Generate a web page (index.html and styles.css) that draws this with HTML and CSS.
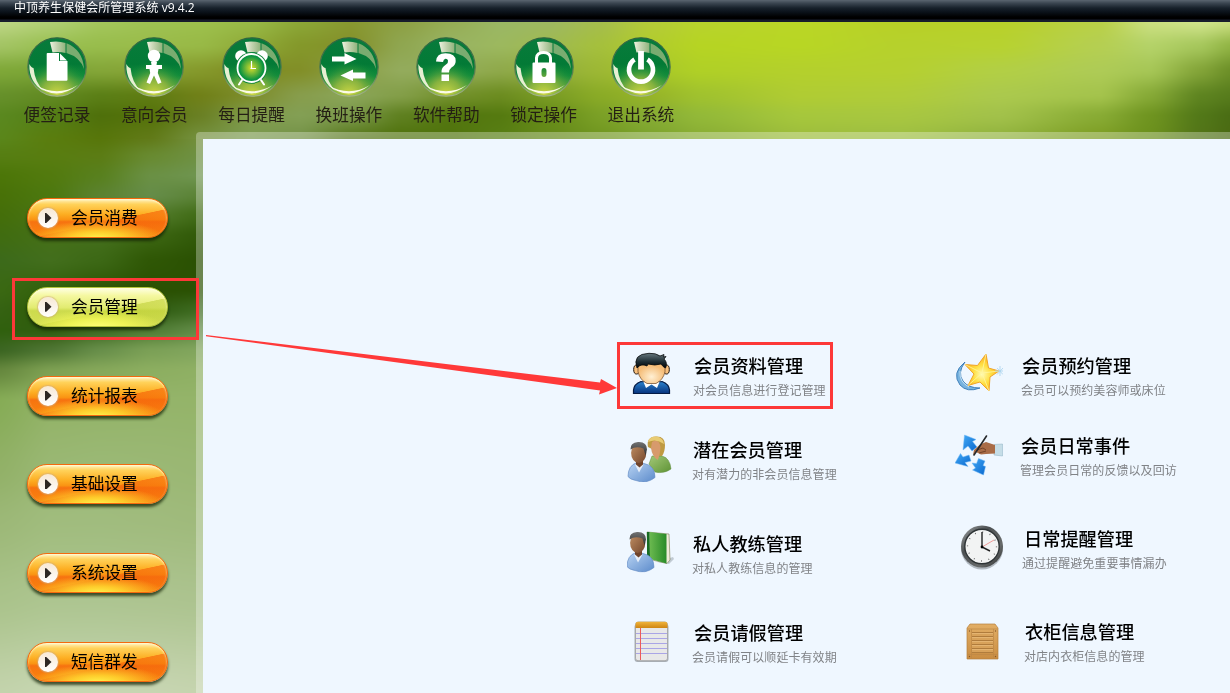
FILE: index.html
```html
<!DOCTYPE html>
<html lang="zh-CN">
<head>
<meta charset="utf-8">
<title>中顶养生保健会所管理系统</title>
<link rel="stylesheet" href="styles.css">
</head>
<body>
<canvas class="backdrop" width="1230" height="693" aria-hidden="true"></canvas>

<header class="titlebar">中顶养生保健会所管理系统 v9.4.2</header>

<svg class="defs" aria-hidden="true">
  <defs>
    <linearGradient id="orbFill" x1="0" y1="0" x2="0" y2="1"><stop offset="0" stop-color="#087b3c"/><stop offset=".45" stop-color="#037a36"/><stop offset=".65" stop-color="#128c3b"/><stop offset="1" stop-color="#a6c040"/></linearGradient>
    <radialGradient id="orbGlow" cx=".5" cy="1" r=".62"><stop offset="0" stop-color="#d1d944"/><stop offset=".45" stop-color="#86b23f"/><stop offset="1" stop-color="#0b8a39" stop-opacity="0"/></radialGradient>
    <linearGradient id="glass"><stop offset="0" stop-color="#eef2df"/><stop offset=".45" stop-color="#c3d3b0"/><stop offset="1" stop-color="#8fb37c"/></linearGradient>
    <linearGradient id="rim" x1="0" y1="0" x2="0" y2="1"><stop offset="0" stop-color="#2d6540"/><stop offset=".6" stop-color="#587d50"/><stop offset="1" stop-color="#a5b48c"/></linearGradient>
    <radialGradient id="clockGlow"><stop offset="0" stop-color="#d8dc2c"/><stop offset=".85" stop-color="#0c9440"/></radialGradient>
    <symbol id="orb" viewBox="0 0 60 60">
      <circle cx="30" cy="30" r="29.200" fill="url(#orbFill)" stroke="url(#rim)" stroke-width="1.200"/>
      <circle cx="30" cy="30" r="28" fill="url(#orbGlow)"/>
      <path d="M23 5Q31 3.500 38.500 6V16Q32 14.500 25.500 15.500Z" fill="url(#glass)"/>
      <path d="M39.500 6.300Q56 13 57 32 53 20 39.500 16Z" fill="#8fb57a" opacity=".85"/>
      <path d="M2.300 27Q2 46 17 54 8 46 6.500 31Q4.500 31 2.300 27Z" fill="#e6efd2"/>
      <path d="M9 48Q29 65 51 48 30 60.500 9 48Z" fill="#fbfbe8"/>
    </symbol>
    <linearGradient id="skin" x1="0" y1="0" x2="1" y2="1"><stop offset="0" stop-color="#c29064"/><stop offset="1" stop-color="#74472d"/></linearGradient>
    <linearGradient id="hair" x1="0" y1="0" x2="0" y2="1"><stop offset="0" stop-color="#727272"/><stop offset="1" stop-color="#303030"/></linearGradient>
    <linearGradient id="shirt" x1="0" y1="0" x2="1" y2="1"><stop offset="0" stop-color="#b9d4f3"/><stop offset="1" stop-color="#5c8bcb"/></linearGradient>
    <linearGradient id="blouse" x1="0" y1="0" x2="1" y2="1"><stop offset="0" stop-color="#a3c878"/><stop offset="1" stop-color="#5e9335"/></linearGradient>
    <radialGradient id="face" cx=".5" cy=".7"><stop offset="0" stop-color="#fff0d4"/><stop offset="1" stop-color="#f5bd78"/></radialGradient>
    <linearGradient id="cap" x1="0" y1="0" x2="0" y2="1"><stop offset="0" stop-color="#66777d"/><stop offset=".6" stop-color="#1b2a30"/><stop offset="1" stop-color="#020506"/></linearGradient>
    <linearGradient id="suit" x1="0" y1="0" x2="0" y2="1"><stop offset="0" stop-color="#2b82cd"/><stop offset="1" stop-color="#07337d"/></linearGradient>
    <radialGradient id="gold" cx=".5" cy=".55"><stop offset="0" stop-color="#fffbb5"/><stop offset=".5" stop-color="#ffe044"/><stop offset="1" stop-color="#fdb51e"/></radialGradient>
    <linearGradient id="blueArrow" x1="0" y1="0" x2="1" y2="1"><stop offset="0" stop-color="#42a9f5"/><stop offset="1" stop-color="#0967ce"/></linearGradient>
    <linearGradient id="bezel" x1="0" y1="0" x2="1" y2="1"><stop offset="0" stop-color="#a0a3a3"/><stop offset=".35" stop-color="#4c5052"/><stop offset=".7" stop-color="#686b6b"/><stop offset="1" stop-color="#242626"/></linearGradient>
    <linearGradient id="wood" x1="0" y1="0" x2="0" y2="1"><stop offset="0" stop-color="#e2ae65"/><stop offset="1" stop-color="#c98d42"/></linearGradient>
    <linearGradient id="book"><stop offset="0" stop-color="#6cba50"/><stop offset="1" stop-color="#298b29"/></linearGradient>
    <linearGradient id="orange" x1="0" y1="0" x2="0" y2="1"><stop offset="0" stop-color="#f0b43c"/><stop offset="1" stop-color="#cf8511"/></linearGradient>
    <symbol id="man" viewBox="0 0 30 42">
      <path d="M1 36Q1 25 10 22L17 23Q28 25 28 37 19 44 9 40 3 39 1 36Z" fill="url(#shirt)" stroke="#6a91c7" stroke-width=".7"/>
      <path d="M8 24L12 32 16.500 24" fill="#e6eef8"/><path d="M9 19H16V24L12.500 27 9 24Z" fill="#70442b"/>
      <ellipse cx="11.700" cy="12.500" rx="7.600" ry="10" fill="url(#skin)"/>
      <path d="M3.500 9Q3 2 11 1.500 20 1 20 9L18.500 15 16.500 8Q9 5 3.500 9Z" fill="url(#hair)"/>
    </symbol>
  </defs>
</svg>

<nav class="toolbar">
  <a class="tool"><svg class="orb" viewBox="0 0 60 60"><use href="#orb"/><path d="M20.500 16H32V24H40.500V42.500Q40.500 43.800 39.500 43.800H20.800Q19.700 43.800 19.700 42.700V17Q19.700 16 20.500 16Z" fill="#fff"/><path d="M33 16.500L40 23.500H33Z" fill="#fff"/></svg><span>便签记录</span></a>
  <a class="tool"><svg class="orb" viewBox="0 0 60 60"><use href="#orb"/><circle cx="30" cy="19" r="6.200" fill="#fff"/><path d="M27 25H33L32.500 28H38V32H34.500L33.800 36 37.500 45.500 34 47 30 38.500 26 47 22.500 45.500 26.200 36 25.500 32H22V28H27.500Z" fill="#fff"/></svg><span>意向会员</span></a>
  <a class="tool"><svg class="orb" viewBox="0 0 60 60"><use href="#orb"/><circle cx="19" cy="19" r="5.800" fill="#fff"/><circle cx="40" cy="19" r="5.800" fill="#fff"/><circle cx="29.500" cy="31" r="15.800" fill="#11853b"/><path d="M20 43L17 47.500M39 43L42 47.500" stroke="#fff" stroke-width="2" stroke-linecap="round"/><circle cx="29.500" cy="31" r="14" fill="url(#clockGlow)" stroke="#fff" stroke-width="1.800"/><path d="M29.500 24V32M28.500 31.500H34" stroke="#fff" stroke-width="1.200"/></svg><span>每日提醒</span></a>
  <a class="tool"><svg class="orb" viewBox="0 0 60 60"><use href="#orb"/><path d="M13 19.500H25.500V16L37.500 22 25.500 27.500V24.500H13ZM46.500 35.500H34V32.500L21.500 38.500 34 44V41.500H46.500Z" fill="#fff"/></svg><span>换班操作</span></a>
  <a class="tool"><svg class="orb" viewBox="0 0 60 60"><use href="#orb"/><path d="M20 24.500Q20.500 16.300 29.500 16.300 39.700 16.300 39.700 24 39.700 28 35.500 30.500 33 32.500 33 35.500H25.500Q25 30.500 30 27.500 32.500 25.500 32 23.500 31.500 21.500 29.500 21.700 27.500 22 27 25ZM25.500 37.500H33V44H25.500Z" fill="#fff"/></svg><span>软件帮助</span></a>
  <a class="tool"><svg class="orb" viewBox="0 0 60 60"><use href="#orb"/><path d="M22.500 27V21Q23 15.500 29.500 15.500 36 15.500 36.500 21V27" fill="none" stroke="#fff" stroke-width="3"/><path fill-rule="evenodd" d="M19.500 25.500H40.500Q41.500 25.500 41.500 26.500V45Q41.500 46 40.500 46H19.500Q18.500 46 18.500 45V26.500Q18.500 25.500 19.500 25.500ZM30 31Q27.500 31 27.500 34V37Q27.500 40 30 40 32.500 40 32.500 37V34Q32.500 31 30 31Z" fill="#fff"/></svg><span>锁定操作</span></a>
  <a class="tool"><svg class="orb" viewBox="0 0 60 60"><use href="#orb"/><path d="M23.500 22.500A12 12 0 1 0 36.500 22.500" fill="none" stroke="#fff" stroke-width="4.600"/><path d="M30 14V32.500" stroke="#fff" stroke-width="5.800"/></svg><span>退出系统</span></a>
</nav>

<div class="body">
  <aside class="sidebar">
    <a class="pill"><i class="play"></i>会员消费</a>
    <a class="pill active"><i class="play"></i>会员管理<b class="mark"></b></a>
    <a class="pill"><i class="play"></i>统计报表</a>
    <a class="pill"><i class="play"></i>基础设置</a>
    <a class="pill"><i class="play"></i>系统设置</a>
    <a class="pill"><i class="play"></i>短信群发</a>
  </aside>

  <main class="panel">
    <svg class="arrow" viewBox="0 0 422 70"><path d="M3 8L397 55.500 398 52 414 61 396 67.500 397 63.500 3 9.200Z" fill="#ff3939"/></svg>
    <div class="column left">
      <a class="item r1">
        <svg class="icon" viewBox="0 0 48 48">
          <path d="M6.500 43.500V40Q7 34 14 31.500L24.500 33 35 31.500Q42 34 42.500 40V43.500Z" fill="url(#suit)" stroke="#041b45" stroke-width="1.200"/>
          <path d="M16.500 32L19 38 24.500 34.500 30 38 32.500 32Z" fill="#fff"/>
          <ellipse cx="9.500" cy="19.500" rx="2.800" ry="4.500" fill="#f8c07e" stroke="#1a1109"/><ellipse cx="39.500" cy="19.500" rx="2.800" ry="4.500" fill="#f8c07e" stroke="#1a1109"/>
          <path d="M11 14Q24 8 38 14V22Q36 30 29 33.500H20Q13 30 11 22Z" fill="url(#face)" stroke="#6b4420" stroke-width=".7"/>
          <path d="M10 18Q5 4 22 3.300 29 3 33 6L37 4.500 36.500 7 39 6.500 37 9Q41 13 38.500 18 36 17 34 14 28 16 21 14L20 16Q14 13 10 18Z" fill="url(#cap)" stroke="#080b0c" stroke-width=".8"/>
        </svg>
        <span class="copy"><strong>会员资料管理</strong><small>对会员信息进行登记管理</small></span><b class="mark"></b>
      </a>
      <a class="item r2">
        <svg class="icon" viewBox="0 0 48 48">
          <path d="M25 22H35Q43 24 44 35 37 40 28 38L22 30Z" fill="url(#blouse)" stroke="#5b8936" stroke-width=".5"/>
          <path d="M21 13Q19 3 29 2.500 38 2 38 11 38 18 35 22H28Q26 20 25 15Z" fill="#bf9a42"/><path d="M25 8Q32 4 33.500 13 33 22 30.500 26 25 22 24 14Z" fill="#d79a6c"/><path d="M21 8Q22 2.500 29 2.500 36 3 37 10 29 4 21 8Z" fill="#e8cb73"/>
          <use href="#man" x="0" y="6.500" width="30" height="42"/>
        </svg>
        <span class="copy"><strong>潜在会员管理</strong><small>对有潜力的非会员信息管理</small></span>
      </a>
      <a class="item r3">
        <svg class="icon" viewBox="0 0 48 48">
          <path d="M30 34L46 29 47 31 42 36Z" fill="#7d8a91" opacity=".4"/>
          <path d="M20 4L42 6 43 32 40 35.500 21 31Z" fill="#f0ecd9" stroke="#777852" stroke-width=".6"/><path d="M22.500 4L39.500 6V35.500L23 31Z" fill="url(#book)"/><path d="M20 4H22.500L23 31 20 29Z" fill="#176b21"/>
          <use href="#man" x="-1" y="2.500" width="30" height="42"/>
        </svg>
        <span class="copy"><strong>私人教练管理</strong><small>对私人教练信息的管理</small></span>
      </a>
      <a class="item r4">
        <svg class="icon" viewBox="0 0 48 48">
          <rect x="7.500" y="7" width="34" height="38" rx="3" fill="#7b8288" opacity=".6"/>
          <rect x="8.500" y="5" width="32" height="38.700" rx="2.500" fill="#e8e8e8" stroke="#999" stroke-width=".7"/>
          <path d="M8.500 11V7Q8.500 4.800 11 4.800H38Q40.500 4.800 40.500 7V11Z" fill="url(#orange)"/>
          <path d="M9 16.500H40M9 21.500H40M9 26.500H40M9 31.500H40M9 36.500H40" stroke="#aaa5e6"/><path d="M13.500 11V43" stroke="#ed5a5a"/>
        </svg>
        <span class="copy"><strong>会员请假管理</strong><small>会员请假可以顺延卡有效期</small></span>
      </a>
    </div>
    <div class="column right">
      <a class="item s1">
        <svg class="icon" viewBox="0 0 48 48">
          <path d="M10 12Q-4 23 5 35 12 43 25 38 13 38 8 31 2 23 10 12Z" fill="#78b3df" stroke="#2a6eaf" stroke-width=".8"/><path d="M5 21Q4 32 14 37" fill="none" stroke="#c6e2f5" stroke-width="1"/>
          <path d="M31 4L33.500 18 44 21 35 27 34 41 25 32 13 35.500 19 24 10 14.500 22.500 15.500Z" fill="url(#gold)" stroke="#f0a429" stroke-linejoin="round"/>
          <path d="M27 23L31 4M27 23L44 21M27 23L34 41M27 23L13 35.500M27 23L10 14.500" stroke="#fff6a3" stroke-width=".8"/>
          <path d="M45 16V26M40 21H48M42 18L48 24.500M42 24.500L48 18" stroke="#a7d2ee" stroke-width=".8"/>
        </svg>
        <span class="copy"><strong>会员预约管理</strong><small>会员可以预约美容师或床位</small></span>
      </a>
      <a class="item s2">
        <svg class="icon" viewBox="0 0 48 48">
          <g fill="url(#blueArrow)" stroke="#73b9f4" stroke-width=".5"><path d="M9.500 5L21 9.500 17.500 11.500 22 17 17 21 13 16 8 20Z"/><path d="M0 33L5.500 23.500 8 27 14 25 16 31 10 32.500 13 36.500Z"/><path d="M17 33L21.500 33.500 23.500 28.500 30 31 28 35.500 30.500 36.500 28.500 45 17.500 40 20.500 38Z"/></g>
          <path d="M39 14.500L47.500 14V26L39 25Z" fill="#c5dde7" stroke="#8eb3c4" stroke-width=".5"/>
          <path d="M19 20L25 14.500 31 12 40 15V23.500L31 24 26 24.500 21 22 18 25Z" fill="#a96c47"/><path d="M22 20L28 18 31 20M24 23L31 21" fill="none" stroke="#643720" stroke-width=".8"/>
          <path d="M31.500 6L19 25" stroke="#26292c" stroke-width="1.600" stroke-linecap="round"/>
        </svg>
        <span class="copy"><strong>会员日常事件</strong><small>管理会员日常的反馈以及回访</small></span>
      </a>
      <a class="item s3">
        <svg class="icon" viewBox="0 0 48 48">
          <circle cx="27" cy="25.500" r="21" fill="#737c83" opacity=".5"/><circle cx="27" cy="23.500" r="21" fill="url(#bezel)"/><circle cx="27" cy="23.500" r="17.200" fill="#f2f3f3" stroke="#2e3335" stroke-width="1.400"/>
          <circle cx="27" cy="23.500" r="14.500" fill="none" stroke="#555" stroke-width="1.300" stroke-dasharray=".8 6.790"/>
          <path d="M27 24L39 17" stroke="#ef9b98"/><path d="M27 9V24L35 28" fill="none" stroke="#222" stroke-width="1.400"/><circle cx="27" cy="24" r="1.400"/>
        </svg>
        <span class="copy"><strong>日常提醒管理</strong><small>通过提醒避免重要事情漏办</small></span>
      </a>
      <a class="item s4">
        <svg class="icon" viewBox="0 0 48 48">
          <path d="M15 8H40L43 12V43H12V12Z" fill="url(#wood)" stroke="#b57f3e" stroke-width=".7"/><path d="M12.500 13H42.500M12.500 38.500H42.500M16.500 13V43M38.500 13V43" stroke="#bd8645" stroke-width=".7"/>
          <path d="M17 16H38V37H17Z" fill="#d8a25a"/><path d="M17 16.500H38M17 20.500H38M17 24.500H38M17 28.500H38M17 32.500H38M17 36.500H38" stroke="#b07c3c"/><path d="M17 17.500H38M17 21.500H38M17 25.500H38M17 29.500H38M17 33.500H38" stroke="#ecc181" stroke-width=".6"/>
          <g fill="#86562a"><circle cx="14.500" cy="15" r=".7"/><circle cx="40.500" cy="15" r=".7"/><circle cx="14.500" cy="40.500" r=".7"/><circle cx="40.500" cy="40.500" r=".7"/></g>
        </svg>
        <span class="copy"><strong>衣柜信息管理</strong><small>对店内衣柜信息的管理</small></span>
      </a>
    </div>
  </main>
</div>
<script src="backdrop.js"></script>
</body>
</html>
```
FILE: styles.css
```css
* { box-sizing: border-box; }
body {
  margin: 0;
  width: 1230px;
  height: 693px;
  overflow: hidden;
  position: relative;
  display: flex;
  flex-direction: column;
  font-family: "Noto Sans CJK SC", "Noto Sans", sans-serif;
  color: #000;
  background: #94b468;
}
.backdrop { position: absolute; inset: 0; width: 1230px; height: 693px; z-index: -1; }
.defs { position: absolute; width: 0; height: 0; }
.titlebar {
  height: 22px;
  flex: none;
  padding-left: 14px;
  font: 12px/16px "Open Sans", "Noto Sans CJK SC", sans-serif;
  letter-spacing: .04px;
  color: #fff;
  background: linear-gradient(#5a6570 0, #3c4752 3px, #17212b 8px, #0b121a 12px, #000 17px, #000 19px, #171c2c 20px, #171c2c 22px);
}
.toolbar { height: 110px; flex: none; display: flex; padding: 15px 0 0 8.3px; }
.tool { width: 97.33px; display: flex; flex-direction: column; align-items: center; gap: 7px; }
.tool span { font-size: 16.7px; line-height: 20px; color: #241f14; white-space: nowrap; }
.orb { width: 60px; height: 60px; display: block; }
.body { flex: 1; display: flex; min-height: 0; }
.sidebar {
  width: 196px;
  flex: none;
  display: flex;
  flex-direction: column;
  gap: 48.8px;
  padding: 66px 0 0 27px;
}
.pill {
  position: relative;
  width: 141px;
  height: 40px;
  flex: none;
  display: flex;
  align-items: center;
  gap: 13px;
  padding: 0 0 2px 10px;
  border: 1px solid #f5690d;
  border-radius: 20px;
  font-size: 16.7px;
  white-space: nowrap;
  background:
    radial-gradient(ellipse 68px 18px at 50% 104%, #fff34a 0, rgba(255, 218, 48, .85) 40%, rgba(255, 150, 20, 0) 100%),
    linear-gradient(168deg, rgba(255, 255, 255, 0) 58%, rgba(246, 100, 10, .65) 59%, rgba(246, 110, 10, .2) 100%),
    linear-gradient(#fff1be 0, #ffd25a 14%, #fdae22 40%, #fa9413 54%, #f77310 60%, #f9850e 100%);
  box-shadow: 0 3px 3px rgba(20, 35, 5, .75), inset 0 1px 2px rgba(255, 255, 220, .8);
}
.active {
  border-color: #b3c43a;
  background:
    radial-gradient(ellipse 68px 18px at 50% 104%, #ffff75 0, rgba(247, 250, 90, .8) 45%, rgba(220, 230, 70, 0) 100%),
    linear-gradient(168deg, rgba(255, 255, 255, 0) 58%, rgba(184, 202, 47, .5) 59%, rgba(190, 208, 60, .2) 100%),
    linear-gradient(#ffffe3 0, #f5f8a1 20%, #e2eb70 52%, #cddb4d 60%, #d4df54 100%);
}
.play {
  width: 20px;
  height: 20px;
  margin-top: 2px;
  border-radius: 50%;
  background: linear-gradient(#f7e8d5, #fff);
  box-shadow: 0 0 1px 1px rgba(205, 170, 130, .55);
  display: grid;
  place-items: center;
}
.play::after {
  content: "";
  width: 7px;
  height: 10px;
  background: #2d2723;
  clip-path: polygon(0 0, 25% 0, 100% 50%, 25% 100%, 0 100%);
}
.mark { position: absolute; border: 3px solid #fd3838; }
.pill .mark { left: -16px; top: -10px; width: 187px; height: 62px; z-index: 3; }
.panel {
  position: relative;
  flex: 1;
  display: flex;
  border: solid rgba(255, 255, 255, .3);
  border-width: 7px 0 0 7px;
  border-top-left-radius: 4px;
  background: #eff7ff;
  background-clip: padding-box;
}
.arrow { position: absolute; left: 0; top: 188px; width: 422px; height: 70px; }
.column { display: flex; flex-direction: column; padding-top: 203px; flex: none; }
.left { margin-left: 414px; width: 328px; }
.right { width: 285px; }
.item { position: relative; display: flex; padding: 8px 0 0 10px; flex: none; gap: 18px; }
.icon { width: 48px; height: 48px; flex: none; }
.copy { display: flex; flex-direction: column; gap: 5px; padding-top: 3px; white-space: nowrap; }
.copy strong { font-size: 18.2px; line-height: 24px; font-weight: 500; }
.copy small { font-size: 12px; line-height: 16px; letter-spacing: .06px; color: #808387; }
.item .mark { left: 0; top: 0; width: 216px; height: 67px; }
.r1, .r4 { height: 84px; }
.r2 { height: 94px; }
.r3 { height: 89px; }
.s1 { height: 80px; }
.s2, .s3 { height: 93px; }
.s4 { height: 84px; }
.r1 strong, .r4 strong, .s1 strong, .s2 strong { padding-left: 1px; }
.r4 small, .r2 small, .r3 small { margin-left: -1px; }
.s2 .copy { margin-left: -1px; }
.s3 strong { padding-left: 3px; }
.s3 small { padding-left: 1px; }
.s4 strong { padding-left: 4px; }
.s4 small { padding-left: 3px; }
```
FILE: backdrop.js
```javascript
// Paints the soft green leaf backdrop by interpolating between colour stops.
const canvas = document.querySelector('.backdrop');
const ctx = canvas.getContext('2d');

const header = {
  xs: [0, 50, 100, 150, 200, 250, 300, 350, 400, 450, 500, 550, 600, 650, 700, 800, 900, 1000, 1100, 1150, 1200, 1230],
  ys: [22, 45, 70, 95, 115, 137],
  rows: [
    'bcd583 b0cf74 a3c65b 9ec152 9dc04c 98b946 8ba636 889830 8da044 96ad55 9ab764 9eb860 a5bd4c b4cb38 b8d32c bad626 b8d027 b8d02a b9d048 cadf80 cfe38a c8dd7e',
    'a3c464 9ac052 98bd4c 9abc4a 98b946 90ab38 84982a 84902a 8fa650 98b362 9cb85e 9fba50 a5c03c b1cc2c b6d423 b8d624 b6d12c b7d230 b5cf52 b4d268 a6c75c 92b545',
    '7fa838 7ba536 84a638 88a336 85992b 808c22 828f28 8b9e44 93ab5c 93ad5a 8fa94a 92ae3c 9db834 a8c728 b0d026 b4d02c b5d030 b2cf45 aecb56 a6c656 83a438 6d9028',
    '66902a 628a22 5b7f16 5f7c12 708018 7d8d2c 879d4c 8aa558 839e48 73912c 6c8c20 7a9c24 8aab26 96b428 a0c22e b0cc33 b0cc3a abc94d a4c34c 86a936 5e8420 577c1c',
    '5a881f 547f16 4f700b 55720a 6a8024 7f9a4a 839f54 7a984a 5f8020 53760f 557a10 678d18 7ba026 86ac34 93b938 a6c73c a8c740 a2c14a 88ab34 6f9420 527818 4a6d14',
    '5a861a 5a7d0e 57760a 617a18 74913f 7a9a50 739146 56761a 4e710b 50740d 587f14 64891a 6f951f 7ba22c 88ac33 9cbc3c 9dbe42 8fb13c 7c9c22 6b901c 537418 4b6a12'
  ]
};
const side = {
  xs: [0, 50, 100, 150, 205],
  ys: [137, 155, 175, 195, 215, 235, 260, 290, 310, 330, 350, 370, 400, 470, 520, 600, 693],
  rows: [
    '5a861a 5a7d0e 57760a 617a18 74913f',
    '567e12 587d10 5b7c14 688a30 6f9144',
    '4c7608 527a0e 58801e 6a9044 6f9550',
    '487108 4c780f 5b8230 658c48 5a8234',
    '446e0a 4a7416 527a28 517a2a 3f6a14',
    '406c10 457018 446f1c 3c6612 305808',
    '3c6a1a 426e1c 3c6815 2f5705 2a5002',
    '3a6812 32600c 2c5504 2a5002 2b5204',
    '356212 2c5a06 2c5608 305c12 3f6c22',
    '30600e 315c10 3e6b22 4f7c34 638c48',
    '3c6622 4f7634 688f4a 7ba056 82a65e',
    '66883e 7da052 86a85a 8cae60 8fb064',
    '86ac56 92b266 93b368 94b46a 94b469',
    '92b168 9ab874 9bb976 9bb875 9ab773',
    '9cb877 a0bc7d a0bc7e a0bb7d 9fba7b',
    'aac38b adc590 adc591 adc490 acc38f',
    'c3d3ac c6d6b1 c7d6b2 c7d5b2 c5d4ae'
  ]
};

function paint(mesh) {
  const { xs, ys } = mesh;
  const colours = mesh.rows.map(r => r.split(' ').map(h => [0, 2, 4].map(i => parseInt(h.substr(i, 2), 16))));
  const width = xs[xs.length - 1], top = ys[0], height = ys[ys.length - 1] - top;
  const image = ctx.createImageData(width, height);
  const smooth = t => t * .6 + t * t * (3 - 2 * t) * .4;
  for (let y = 0, j = 0; y < height; y++) {
    while (y + top >= ys[j + 1]) j++;
    const v = smooth((y + top - ys[j]) / (ys[j + 1] - ys[j]));
    for (let x = 0, i = 0; x < width; x++) {
      while (x >= xs[i + 1]) i++;
      const u = smooth((x - xs[i]) / (xs[i + 1] - xs[i]));
      const p = (y * width + x) * 4;
      for (let c = 0; c < 3; c++) {
        const a = colours[j][i][c] * (1 - u) + colours[j][i + 1][c] * u;
        const b = colours[j + 1][i][c] * (1 - u) + colours[j + 1][i + 1][c] * u;
        image.data[p + c] = a * (1 - v) + b * v;
      }
      image.data[p + 3] = 255;
    }
  }
  ctx.putImageData(image, 0, top);
}

paint(side);
paint({ ...header, ys: [22, 45, 70, 95, 115, 139] });
```
